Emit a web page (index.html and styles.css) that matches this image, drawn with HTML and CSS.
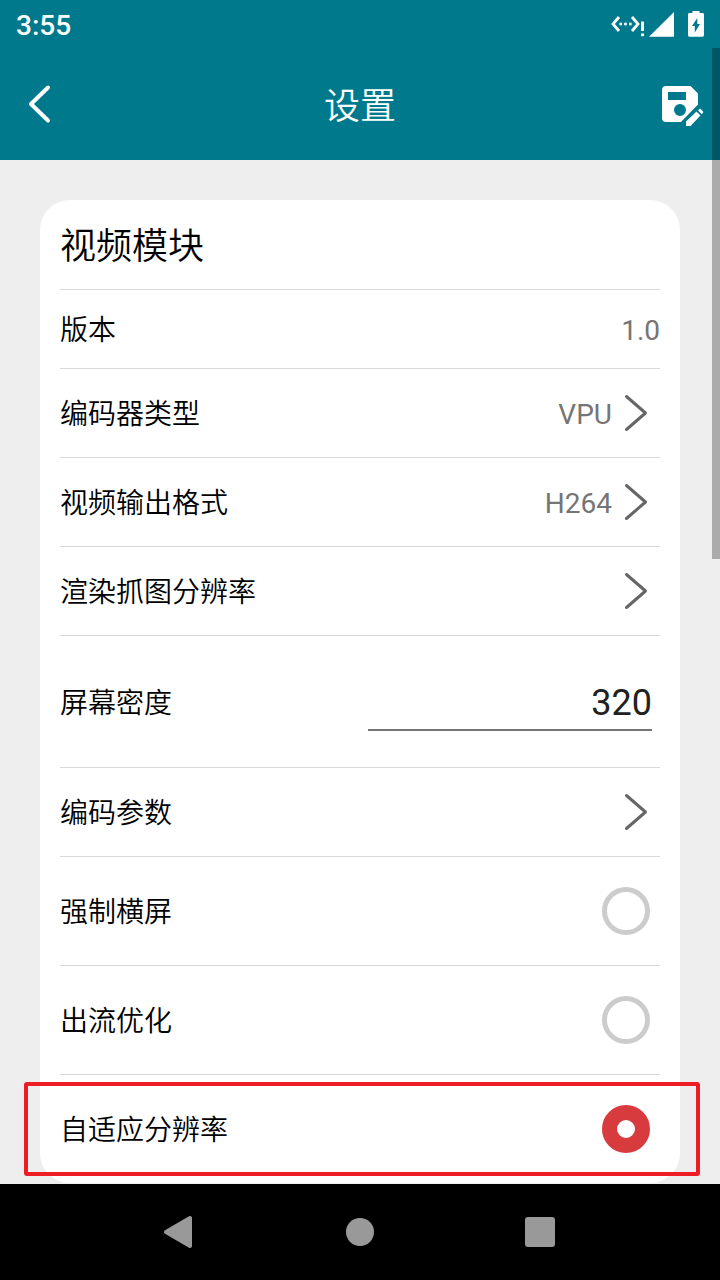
FILE: index.html
```html
<!DOCTYPE html>
<html lang="zh-CN">
<head>
    <meta charset="UTF-8">
    <meta name="viewport" content="width=device-width, initial-scale=1.0">
    <title>设置</title>
    <link rel="stylesheet" href="styles.css">
</head>
<body>
    <div class="screen">
        <div class="status-bar">
            <span class="time">3:55</span>
            <svg class="status-icons" width="96" height="32" viewBox="0 0 96 32" fill="#fff">
                <path d="M9 9 L3 16 L9 23 M22 9 L28 16 L22 23" fill="none" stroke="#fff" stroke-width="2.800"/>
                <rect x="9.500" y="14.700" width="2.600" height="2.600"/>
                <rect x="14.200" y="14.700" width="2.600" height="2.600"/>
                <rect x="19" y="14.700" width="2.600" height="2.600"/>
                <rect x="31" y="13.500" width="3" height="9.500"/>
                <rect x="31" y="25.500" width="3" height="2.700"/>
                <path d="M64 4 V28.700 H39 Z"/>
                <path fill-rule="evenodd" d="M82.500 3 H89.500 V5 H92.500 Q94 5 94 6.500 V27 Q94 28.700 92.500 28.700 H79.500 Q78 28.700 78 27 V6.500 Q78 5 79.500 5 H82.500 Z M87.300 10 L82 18 H84.800 V24.500 L90 16 H87.300 Z"/>
            </svg>
        </div>
        <header class="header">
            <svg class="back" width="24" height="40" viewBox="0 0 24 40">
                <path d="M20 3.500 L3 20 L20 36.500" fill="none" stroke="#fff" stroke-width="4" stroke-linecap="round" stroke-linejoin="round"/>
            </svg>
            <h1>设置</h1>
            <svg class="save" width="42" height="42" viewBox="0 0 42 42" fill="#fff">
                <path fill-rule="evenodd" d="M4 0 H28.500 L36 7.500 V18.500 L19 36 H4 Q0 36 0 32 V4 Q0 0 4 0 Z M6 6 V14 H24 V6 Z M18 18 A6 6 0 1 0 18 30 A6 6 0 1 0 18 18 Z"/>
                <path d="M24 40 V35.500 L34.500 25.500 L38.500 29.500 L28.500 40 Z M36 24.200 L37.500 23 Q38 22.500 38.700 23 L41 25.500 Q41.500 26 41 26.700 L39.600 28.200 Z"/>
            </svg>
        </header>
        <main class="content">
            <section class="card">
                <div class="row row-title"><h2>视频模块</h2></div>
                <div class="row row-version">
                    <span class="label">版本</span>
                    <span class="value">1.0</span>
                </div>
                <div class="row">
                    <span class="label">编码器类型</span>
                    <span class="value">VPU</span>
                    <svg class="arrow" viewBox="0 0 24 38"><path d="M2.500 2.500 L21.500 19 L2.500 35.500"/></svg>
                </div>
                <div class="row">
                    <span class="label">视频输出格式</span>
                    <span class="value">H264</span>
                    <svg class="arrow" viewBox="0 0 24 38"><path d="M2.500 2.500 L21.500 19 L2.500 35.500"/></svg>
                </div>
                <div class="row">
                    <span class="label">渲染抓图分辨率</span>
                    <span class="value"></span>
                    <svg class="arrow" viewBox="0 0 24 38"><path d="M2.500 2.500 L21.500 19 L2.500 35.500"/></svg>
                </div>
                <div class="row row-input">
                    <span class="label">屏幕密度</span>
                    <input type="text" class="density" value="320">
                </div>
                <div class="row">
                    <span class="label">编码参数</span>
                    <span class="value"></span>
                    <svg class="arrow" viewBox="0 0 24 38"><path d="M2.500 2.500 L21.500 19 L2.500 35.500"/></svg>
                </div>
                <div class="row row-switch">
                    <span class="label">强制横屏</span>
                    <span class="radio"></span>
                </div>
                <div class="row row-switch">
                    <span class="label">出流优化</span>
                    <span class="radio"></span>
                </div>
                <div class="row row-switch">
                    <span class="label">自适应分辨率</span>
                    <span class="radio checked"></span>
                    <div class="highlight"></div>
                </div>
            </section>
        </main>
        <nav class="nav-bar">
            <svg width="30" height="34" viewBox="0 0 30 34"><path d="M3 17 L27 3 V31 Z" fill="#999" stroke="#999" stroke-width="4" stroke-linejoin="round"/></svg>
            <span class="home"></span>
            <span class="recent"></span>
        </nav>
        <div class="scrollbar"></div>
    </div>
</body>
</html>
```
FILE: styles.css
```css
* {
    box-sizing: border-box;
}

body {
    margin: 0;
    font-family: Roboto, "Noto Sans CJK SC", sans-serif;
    color: #000;
}

h1, h2 {
    margin: 0;
    font-weight: 350;
}

.screen {
    position: relative;
    width: 720px;
    height: 1280px;
    overflow: hidden;
    display: flex;
    flex-direction: column;
    background: #eee;
}

.status-bar {
    height: 48px;
    padding: 0 12px 0 16px;
    display: flex;
    align-items: center;
    justify-content: space-between;
    background: #00798c;
    color: #fff;
}

.time {
    font-size: 28px;
    font-weight: 500;
    line-height: 32px;
    padding-top: 3px;
}

.status-icons {
    margin-right: 2px;
}

.header {
    height: 112px;
    padding: 0 16px 0 28px;
    display: flex;
    align-items: center;
    background: #00798c;
    color: #fff;
}

.header h1 {
    flex: 1;
    padding: 0 0 3px 6px;
    text-align: center;
    font-size: 36px;
}

.save {
    margin-top: 5px;
}

.content {
    height: 1024px;
    padding: 40px 40px 0;
}

.card {
    height: 983px;
    padding: 0 20px;
    background: #fff;
    border-radius: 30px;
}

.row {
    position: relative;
    height: 89px;
    display: flex;
    align-items: center;
    border-bottom: 1px solid #d8d8d8;
    font-size: 28px;
    line-height: 40px;
}

.row:last-child {
    border-bottom: none;
}

.row-title {
    height: 90px;
}

.row-title h2 {
    padding-top: 4px;
    font-size: 36px;
}

.row-version {
    height: 79px;
}

.row-input {
    height: 132px;
}

.row-switch {
    height: 109px;
}

.row-switch:last-child {
    height: 108px;
}

.label {
    padding-top: 4px;
    font-weight: 350;
}

.value {
    margin-left: auto;
    padding-top: 4px;
    color: #757575;
}

.arrow {
    width: 24px;
    height: 38px;
    margin: 0 12px;
    fill: none;
    stroke: #666;
    stroke-width: 3;
    stroke-linecap: round;
    stroke-linejoin: round;
}

.density {
    width: 284px;
    height: 56px;
    margin: 2px 8px 0 auto;
    padding: 2px 0 0;
    border: none;
    border-bottom: 2px solid #757575;
    background: none;
    font-family: inherit;
    font-size: 36px;
    color: #212121;
    text-align: right;
}

.radio {
    width: 48px;
    height: 48px;
    margin: 0 10px 0 auto;
    border: 5px solid #ccc;
    border-radius: 50%;
}

.radio.checked {
    border: 15px solid #d73b3e;
}

/* red frame around the last option */
.highlight {
    position: absolute;
    top: 7px;
    left: -36px;
    width: 676px;
    height: 94px;
    border: 4px solid #ee1c25;
    border-radius: 3px;
}

.nav-bar {
    height: 96px;
    padding: 0 165px 0 163px;
    display: flex;
    align-items: center;
    justify-content: space-between;
    background: #000;
}

.home {
    width: 28px;
    height: 28px;
    margin-left: 2px;
    background: #999;
    border-radius: 50%;
}

.recent {
    width: 30px;
    height: 30px;
    background: #999;
    border-radius: 3px;
}

.scrollbar {
    position: absolute;
    top: 48px;
    right: 0;
    width: 8px;
    height: 511px;
    background: rgba(0, 0, 0, 0.28);
}
```
